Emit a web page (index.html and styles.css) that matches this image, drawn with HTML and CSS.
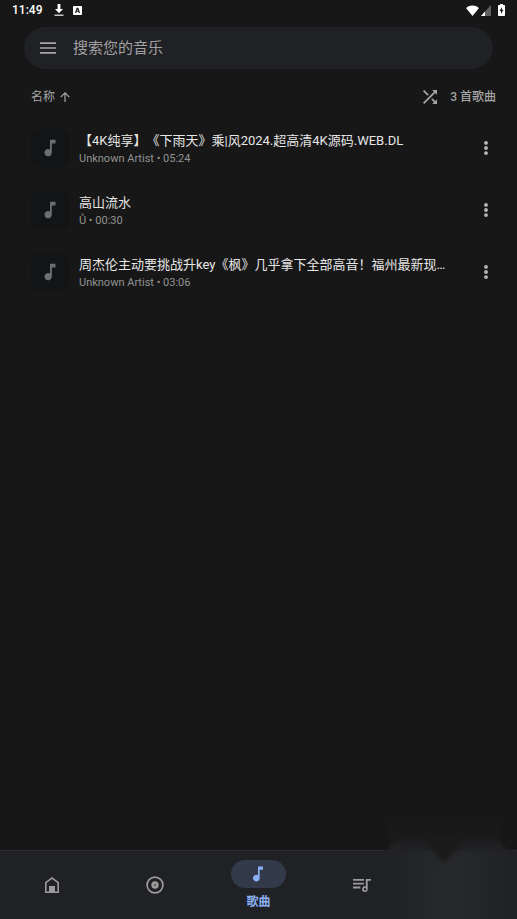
FILE: index.html
```html
<!DOCTYPE html>
<html lang="zh-CN">
<head>
<meta charset="utf-8">
<meta name="viewport" content="width=device-width, initial-scale=1">
<title>歌曲</title>
<link rel="stylesheet" href="styles.css">
</head>
<body>
<svg class="defs" aria-hidden="true">
  <symbol id="note" viewBox="0 0 24 24"><path d="M12 3v10.55A4 4 0 1 0 14 17V7h4V3z"/></symbol>
  <symbol id="more" viewBox="0 0 24 24"><circle cx="12" cy="5.200" r="2.600"/><circle cx="12" cy="12" r="2.600"/><circle cx="12" cy="18.800" r="2.600"/></symbol>
</svg>
<div class="status">
  <span class="clock">11:49</span>
  <svg class="download" viewBox="0 0 10 13"><path d="M3.600 0h2.800v5H9L5 9.200 1 5h2.600z"/><path d="M.5 10.500h9V12h-9z" opacity=".75"/></svg>
  <svg class="badge" viewBox="0 0 9 9"><path fill-rule="evenodd" d="M1 0h7a1 1 0 0 1 1 1v7a1 1 0 0 1-1 1H1a1 1 0 0 1-1-1V1a1 1 0 0 1 1-1zM3.700 1.700L2 7h1.200l.4-1.200h1.800L5.800 7H7L5.300 1.700zM4.500 3l.5 1.800H4z"/></svg>
  <span class="system">
    <svg class="wifi" viewBox="0 0 13 11"><path d="M6.500 11L.2 3.200C2-.3 11-.3 12.800 3.200z"/></svg>
    <svg class="signal" viewBox="0 0 10 11"><path d="M10 0v11H0z" opacity=".32"/><path d="M4 6.500V11H0z"/></svg>
    <svg class="battery" viewBox="0 0 7 12"><path fill-rule="evenodd" d="M2 0h3v1h1.300q.7 0 .7.700v9.600q0 .7-.7.700H.7q-.7 0-.7-.7V1.700Q0 1 .7 1H2zM4 3L1.600 7H3v3l2.500-4.200H4z"/></svg>
  </span>
</div>
<form class="search" role="search">
  <button class="icon-button" type="button" aria-label="菜单"><svg class="menu" viewBox="0 0 16 12"><path d="M0 .3h16v1.600H0zM0 5.200h16v1.600H0zM0 10.100h16v1.600H0z"/></svg></button>
  <input type="text" aria-label="搜索您的音乐" placeholder="搜索您的音乐">
</form>
<main>
  <div class="toolbar">
    <button class="sort" type="button">名称 <svg class="arrow" viewBox="0 0 10 10"><path d="M5 10V1M.7 5.200L5 .9l4.300 4.300"/></svg></button>
    <button class="icon-button shuffle-button" type="button" aria-label="随机播放"><svg class="shuffle" viewBox="4 4 16 16"><path d="M10.590 9.170L5.410 4 4 5.410l5.170 5.170zM14.500 4l2.040 2.040L4 18.590 5.410 20 17.960 7.460 20 9.500V4zm.33 9.410l-1.410 1.410 3.130 3.130L14.500 20H20v-5.500l-2.040 2.040z"/></svg></button>
    <span class="count">3 首歌曲</span>
  </div>
  <ul class="songs">
    <li class="song">
      <span class="cover"><svg><use href="#note"/></svg></span>
      <div class="info"><div class="title">【4K纯享】《下雨天》乘|风2024.超高清4K源码.WEB.DL</div><div class="meta">Unknown Artist • 05:24</div></div>
      <button class="icon-button" type="button" aria-label="更多"><svg class="more"><use href="#more"/></svg></button>
    </li>
    <li class="song">
      <span class="cover"><svg><use href="#note"/></svg></span>
      <div class="info"><div class="title">高山流水</div><div class="meta">Ů • 00:30</div></div>
      <button class="icon-button" type="button" aria-label="更多"><svg class="more"><use href="#more"/></svg></button>
    </li>
    <li class="song">
      <span class="cover"><svg><use href="#note"/></svg></span>
      <div class="info"><div class="title">周杰伦主动要挑战升key《枫》几乎拿下全部高音！福州最新现…</div><div class="meta">Unknown Artist • 03:06</div></div>
      <button class="icon-button" type="button" aria-label="更多"><svg class="more"><use href="#more"/></svg></button>
    </li>
  </ul>
</main>
<nav class="tabs">
  <a href="#home" aria-label="主页"><svg class="home" viewBox="0 0 14 16"><path fill-rule="evenodd" d="M7 0l7 5.200V16H0V5.200zM7 1.900L1.600 6v8.400H4V9h6v5.400h2.400V6z"/></svg></a>
  <a href="#albums" aria-label="专辑"><svg class="disc" viewBox="0 0 18 18"><circle class="ring" cx="9" cy="9" r="7.900"/><circle class="core" cx="9" cy="9" r="2.500"/></svg></a>
  <a href="#songs" class="active" aria-current="page"><span class="pill"><svg><use href="#note"/></svg></span><span class="label">歌曲</span></a>
  <a href="#playlists" aria-label="播放列表"><svg class="queue" viewBox="0 0 18 13"><path d="M0 0h11v1.800H0zM0 3.800h11v1.800H0zM0 7.600h7.300v1.800H0z"/><path fill-rule="evenodd" d="M12.800 0H18v1.800h-3.300v8.400a2.800 2.800 0 1 1-1.900-2.600zM12 9a1.200 1.200 0 1 0 0 2.400A1.200 1.200 0 0 0 12 9z"/></svg></a>
  <span class="spare"></span>
  <svg class="haze" viewBox="0 0 134 120" preserveAspectRatio="none" aria-hidden="true">
    <defs>
      <filter id="edge" x="-20%" y="-20%" width="140%" height="140%" color-interpolation-filters="sRGB"><feGaussianBlur stdDeviation="2"/></filter>
      <linearGradient id="fade" x2="0" y2="1"><stop offset="0" stop-color="#1b1b1b" stop-opacity="0"/><stop offset="1" stop-color="#1b1b1c"/></linearGradient>
      <linearGradient id="panel" x2="1" y2="0"><stop offset="0" stop-color="#202124"/><stop offset=".3" stop-color="#252629"/><stop offset=".5" stop-color="#28292b"/><stop offset=".7" stop-color="#252629"/><stop offset="1" stop-color="#202124"/></linearGradient>
      <linearGradient id="rise" x2="0" y2="1"><stop offset="0" stop-color="#232427" stop-opacity="0"/><stop offset="1" stop-color="#232427"/></linearGradient>
    </defs>
    <path d="M6 12h112v39H6z" fill="url(#fade)"/>
    <path d="M2 51h128v76H2z" fill="url(#panel)"/>
    <path d="M4 52L20 36h86l20 16z" fill="url(#rise)" filter="url(#edge)"/>
    <path d="M36 35h50L61 64z" fill="#1a1a1b" filter="url(#edge)"/>
  </svg>
</nav>
</body>
</html>
```

FILE: styles.css
```css
* { box-sizing: border-box; }

body {
  margin: 0;
  min-height: 100vh;
  display: flex;
  flex-direction: column;
  background: #171717;
  color: #e6e6e6;
  font-family: Roboto, "Noto Sans CJK SC", sans-serif;
  text-spacing-trim: space-all;
}

svg { display: block; fill: currentColor; }
.defs { position: absolute; width: 0; height: 0; }

button, input {
  padding: 0;
  border: 0;
  background: none;
  color: inherit;
  font: inherit;
}

.icon-button {
  display: grid;
  place-items: center;
  flex: none;
  width: 24px;
  height: 24px;
}

.status {
  display: flex;
  align-items: center;
  height: 20px;
  padding: 0 12px;
  color: #fff;
}
.clock { font-size: 12px; font-weight: 500; line-height: 20px; }
.download { width: 10px; height: 13px; margin-left: 12px; }
.badge { width: 9px; height: 9px; margin-left: 9px; }
.system { display: flex; align-items: center; margin-left: auto; }
.wifi { width: 13px; height: 11px; }
.signal { width: 10px; height: 11px; margin-left: 2px; }
.battery { width: 7px; height: 12px; margin-left: 7px; }

.search {
  display: flex;
  align-items: center;
  gap: 13px;
  height: 42px;
  margin: 7px 24px 0;
  padding: 0 12px;
  border-radius: 21px;
  background: #202124;
  color: #a8a8a9;
}
.menu { width: 16px; height: 12px; }
.search input { flex: 1; min-width: 0; font-size: 15px; line-height: 24px; outline: 0; }
.search input::placeholder { color: #a0a0a1; opacity: 1; }

main { flex: 1; }

.toolbar {
  display: flex;
  align-items: center;
  height: 48px;
  margin-top: 4px;
  padding: 0 21px 0 31px;
  color: #a5a5a5;
  font-size: 12px;
  line-height: 18px;
}
.sort { display: flex; align-items: center; gap: 5px; }
.arrow { width: 10px; height: 10px; fill: none; stroke: currentColor; stroke-width: 1.2; }
.shuffle-button { margin-left: auto; }
.shuffle { width: 14px; height: 14px; }
.count { margin-left: 8px; font-weight: 500; }

.songs { margin: -4px 0 0; padding: 0; list-style: none; }
.song {
  display: flex;
  align-items: center;
  gap: 10px;
  height: 62px;
  padding: 0 19px 0 31px;
}
.cover {
  display: grid;
  place-items: center;
  flex: none;
  width: 38px;
  height: 38px;
  border-radius: 8px;
  background: #121416;
  color: #6c6e70;
}
.cover svg { width: 22px; height: 22px; }
.info { flex: 1; min-width: 0; padding-right: 10px; }
.title {
  overflow: hidden;
  text-overflow: ellipsis;
  white-space: nowrap;
  font-size: 13px;
  line-height: 22px;
}
.meta { color: #929292; font-size: 11px; line-height: 14px; }
.more { width: 18px; height: 18px; color: #b5b5b5; }

.tabs {
  position: relative;
  display: grid;
  grid-template-columns: repeat(5, 1fr);
  height: 69px;
  border-top: 1px solid #2a2b2d;
  background: #202124;
  color: #9b9b9c;
}
.tabs a {
  display: flex;
  flex-direction: column;
  align-items: center;
  justify-content: center;
  color: inherit;
  text-decoration: none;
}
.tabs .active { gap: 5px; color: #8ab0f4; }
.pill {
  display: grid;
  place-items: center;
  width: 55px;
  height: 28px;
  border-radius: 14px;
  background: #323a49;
}
.pill svg { width: 20px; height: 20px; }
.label { font-size: 12px; font-weight: 700; line-height: 18px; }
.home { width: 14px; height: 16px; }
.disc { width: 18px; height: 18px; }
.ring { fill: none; stroke: currentColor; stroke-width: 1.7; }
.core { fill: #686869; stroke: currentColor; stroke-width: 2.4; }
.queue { width: 18px; height: 13px; }
.haze {
  position: absolute;
  right: 0;
  bottom: 0;
  width: 26%;
  height: 120px;
  pointer-events: none;
}
```
